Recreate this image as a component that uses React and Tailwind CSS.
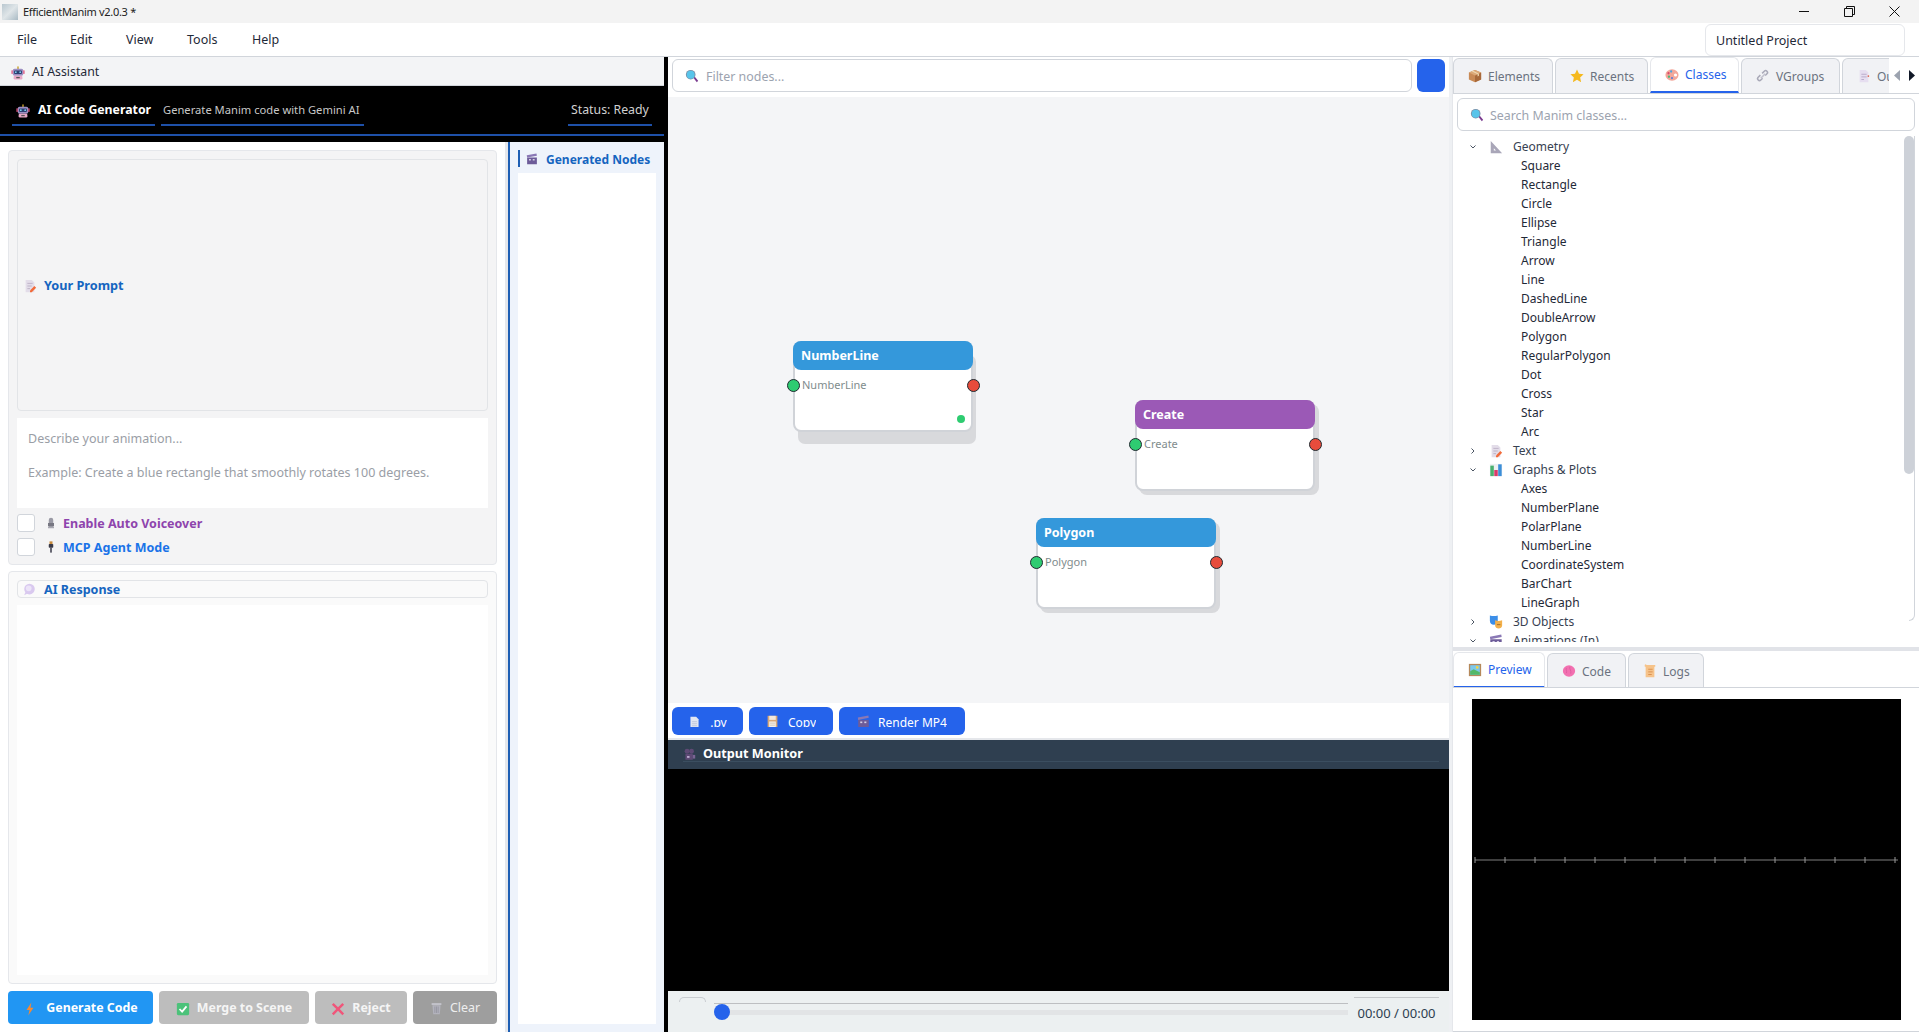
import React from "react";

const icons = {
    robot: <><rect x="7.2" y="0.5" width="1.6" height="3" fill="#c9a227"/><rect x="2" y="3" width="12" height="8" rx="2" fill="#9d8fc2"/><rect x="3.5" y="5" width="9" height="4" rx="1" fill="#2c3e70"/><circle cx="5.5" cy="7" r="1" fill="#7fd4f0"/><circle cx="10.5" cy="7" r="1" fill="#7fd4f0"/><rect x="3" y="11" width="10" height="4.5" rx="1.5" fill="#e9a8c6"/><rect x="6" y="12.5" width="4" height="1.5" fill="#555"/><rect x="0.5" y="5" width="1.5" height="4" fill="#e0557f"/><rect x="14" y="5" width="1.5" height="4" fill="#e0557f"/></>,
    memo: <><path d="M3 1h7l3 3v11H3z" fill="#e3dde9"/><path d="M5 5h6M5 8h5M5 11h3" stroke="#b9aec4" strokeWidth="1"/><path d="M8 13l5-5 2 2-5 5H8z" fill="#f26b3a"/></>,
    bubble: <><circle cx="8" cy="7.5" r="6.5" fill="#d9c9ef"/><circle cx="7" cy="6.5" r="3.5" fill="#ece4f8"/><path d="M3 11l-1.5 4 4-2z" fill="#d9c9ef"/></>,
    clapper: <><rect x="1.5" y="6" width="13" height="9" fill="#6d5c99"/><path d="M1 3l13-2.5.5 3L1.500 6z" fill="#8a78b5"/><rect x="4" y="8" width="2.500" height="2" fill="#d6cfe6"/><rect x="9" y="8" width="2.500" height="2" fill="#d6cfe6"/></>,
    mic: <><rect x="5" y="1" width="6" height="9" rx="3" fill="#9a9aa5"/><path d="M4 8h8v3a2 2 0 0 1-2 2H6a2 2 0 0 1-2-2z" fill="#777782"/><rect x="4" y="13" width="8" height="2" fill="#a8a8b2"/></>,
    plug: <><rect x="6" y="0.500" width="4" height="4" fill="#c98b3c"/><rect x="5" y="4" width="6" height="5" rx="1" fill="#3a3a48"/><rect x="7" y="9" width="2" height="6.500" fill="#3a3a48"/></>,
    bolt: <path d="M9.500 0.500L4 9h3.500L6 15.500 12 6.500H8.500z" fill="#f58a35"/>,
    check: <><rect x="1" y="1" width="14" height="14" rx="1.500" fill="#4cc27a"/><path d="M4 8l3 3 5-6" fill="none" stroke="#fff" strokeWidth="2"/></>,
    cross: <path d="M3 1l5 5 5-5 2 2-5 5 5 5-2 2-5-5-5 5-2-2 5-5-5-5z" fill="#f0567a"/>,
    trash: <><rect x="2" y="1.500" width="12" height="2" fill="#c9c9d2"/><path d="M3 4h10l-1 11H4z" fill="#b3b3bd"/><path d="M6 5.500v8M8 5.500v8M10 5.500v8" stroke="#8b8b96" strokeWidth="0.800"/></>,
    search: <><path d="M9.500 10l1.500-1.500 4 5-1.500 1.500z" fill="#7a3b8f"/><circle cx="6.500" cy="6.500" r="5.500" fill="#7a8fa6"/><circle cx="6.500" cy="6.500" r="4.500" fill="#58c4ea"/></>,
    box: <><path d="M8 1l7 3v8l-7 3-7-3V4z" fill="#c98a56"/><path d="M8 7.500v7.500l7-3V4z" fill="#a8693a"/><path d="M1 4l7 3.500L15 4 8 1z" fill="#dba877"/><path d="M4 2.500l7 3.500v2.500l1.500-.700V5.300L5.500 1.800z" fill="#f0d7b0"/></>,
    star: <path d="M8 0.500l2.300 5 5.200.600-3.900 3.600 1.100 5.300L8 12.300 3.300 15l1.100-5.300L.500 6.100l5.200-.600z" fill="#f5b91f"/>,
    palette: <><ellipse cx="8" cy="8" rx="7.500" ry="6.500" fill="#f3a79a"/><circle cx="4" cy="6" r="1.300" fill="#d84a6b"/><circle cx="7" cy="4" r="1.300" fill="#4aa5e0"/><circle cx="4.500" cy="10" r="1.300" fill="#48b878"/><circle cx="8" cy="11.500" r="1.300" fill="#5e7fd8"/><circle cx="12" cy="8" r="1.800" fill="#fff"/></>,
    link: <><path d="M6.500 9.500l-2 2a2 2 0 0 1-3-3l2.500-2.500" fill="none" stroke="#a9a9b8" strokeWidth="1.800" transform="translate(1 1)"/><path d="M9.500 6.500l2-2a2 2 0 0 0-3-3L6 4" fill="none" stroke="#a9a9b8" strokeWidth="1.800" transform="translate(1 1)"/><path d="M5.500 10.500l5-5" stroke="#c2c2ce" strokeWidth="1.800"/></>,
    page: <><path d="M3 1h7l3 3v11H3z" fill="#e6def0"/><path d="M5 6h6M5 9h6M5 12h3" stroke="#b5a6c6" strokeWidth="1"/><circle cx="13" cy="8" r="1" fill="#e0654f"/></>,
    ruler: <path d="M2 1l13 14H2zM5.500 9.500v2.500H8z" fill="#a9a6b8" fillRule="evenodd"/>,
    bars: <><rect x="1" y="1" width="14" height="14" fill="#eef0f2"/><rect x="1.500" y="3" width="4" height="12" fill="#49b06e"/><rect x="6" y="8" width="4" height="7" fill="#d83a6a"/><rect x="10.500" y="1.500" width="4" height="13.500" fill="#3c8ed8"/></>,
    masks: <><path d="M1 0.500c3 1 6 1 9 0v6c0 3-2 4.500-4.500 4.500S1 9.500 1 6.500z" fill="#3c8ee8"/><path d="M7 6c3 1 5 1 8 0v6c0 2-2 3.500-4 3.500S7 14 7 12z" fill="#f3b04a"/><path d="M9 11h4" stroke="#9a6a2a" strokeWidth="1"/></>,
    picture: <><rect x="1" y="1" width="14" height="14" fill="#b5885a"/><rect x="2.500" y="2.500" width="11" height="11" fill="#7cc8ec"/><path d="M2.500 13.500v-4l4-2.500 7 3.500v3z" fill="#53b868"/><circle cx="10.500" cy="5" r="1.500" fill="#f5d442"/></>,
    brain: <><ellipse cx="8" cy="8" rx="7" ry="6.500" fill="#f270b0"/><path d="M5 4.500c-1 2 1 3 0 6M9 3c-1 3 2 4 1 8" fill="none" stroke="#d9549a" strokeWidth="0.800"/></>,
    scroll: <><path d="M4 1h10v2h-1v12H3V3H2V2a1 1 0 0 1 2-1z" fill="#f6c38a"/><path d="M6 6h5M6 9h5M6 12h4" stroke="#d88c4a" strokeWidth="1"/></>,
    camera: <><circle cx="5" cy="4" r="3" fill="#5e4a75"/><circle cx="10.500" cy="4" r="3" fill="#5e4a75"/><rect x="3" y="7" width="9" height="7.500" fill="#5e4a75"/><rect x="12" y="8.500" width="3" height="4.500" fill="#7a6493"/><rect x="5" y="10" width="3" height="2" fill="#c9b8dc"/></>,
    file: <><path d="M3 1h7l3 3v11H3z" fill="#e2e6f2"/><path d="M5 7h6M5 9.500h6M5 12h6" stroke="#b9c0d6" strokeWidth="1"/></>,
    floppy: <><rect x="2" y="1" width="12" height="14" fill="#d8a878"/><rect x="4" y="1" width="8" height="5" fill="#f2e8dc"/><rect x="4" y="8" width="8" height="7" fill="#f7f1ea"/><path d="M5 10h6M5 12.500h6" stroke="#c4b5a4" strokeWidth="0.800"/></>,
};

const Icon = ({name, size = 14, className = ""}) => (
    <svg viewBox="0 0 16 16" width={size} height={size} className={`shrink-0 ${className}`}>{icons[name]}</svg>
);

const Chevron = ({open}) => (
    <svg viewBox="0 0 8 8" width="8" height="8" className="shrink-0">
        <path d={open ? "M1.500 2.500L4 5l2.500-2.500" : "M2.500 1.500L5 4 2.500 6.500"} fill="none" stroke="#4b5563" strokeWidth="1"/>
    </svg>
);

const Tab = ({icon, label, width, active}) => (
    <div className={`flex items-center shrink-0 overflow-hidden rounded-t-md border border-b-0 pl-[14px] gap-[6px] text-[12px] ${width} ${active ? "h-[36px] bg-white border-[#e5e7eb] border-b-2 border-b-[#2563eb] text-[#2563eb]" : "h-[35px] mt-[1px] bg-[#f1f2f5] border-[#d1d5db] text-[#6b7280]"}`}>
        <Icon name={icon} size={14}/>
        <span className={active ? "" : "pt-[1px]"}>{label}</span>
    </div>
);

const Node = ({title, color, left, top, big}) => (
    <div className={`absolute w-[180px] h-[91px] rounded-lg bg-white border-2 border-[#d0d3d8] ${left} ${top} ${big ? "shadow-[4px_13px_0_-1px_#d8d9dc]" : "shadow-[4px_4px_0_0_#d8d9dc]"}`}>
        <div className="-mx-[2px] -mt-[2px] h-[29px] rounded-lg flex items-center pl-[8px] pt-[2px] text-[12.500px] font-bold text-white" style={{background: color}}>{title}</div>
        <div className="pl-[7px] pt-[7px] text-[11px] leading-[16px] text-[#7f8c8d]">{title}</div>
        <div className="absolute -left-[8px] top-[36px] w-[13px] h-[13px] rounded-full bg-[#2ecc71] border border-[#1f2a30]"/>
        <div className="absolute -right-[9px] top-[36px] w-[13px] h-[13px] rounded-full bg-[#e74c3c] border border-[#1f2a30]"/>
        {big && <div className="absolute right-[6px] bottom-[7px] w-[8px] h-[8px] rounded-full bg-[#2ecc71]"/>}
    </div>
);

const tree = [
    {label: "Geometry", icon: "ruler", open: true},
    {label: "Square"}, {label: "Rectangle"}, {label: "Circle"}, {label: "Ellipse"}, {label: "Triangle"},
    {label: "Arrow"}, {label: "Line"}, {label: "DashedLine"}, {label: "DoubleArrow"}, {label: "Polygon"},
    {label: "RegularPolygon"}, {label: "Dot"}, {label: "Cross"}, {label: "Star"}, {label: "Arc"},
    {label: "Text", icon: "memo"},
    {label: "Graphs & Plots", icon: "bars", open: true},
    {label: "Axes"}, {label: "NumberPlane"}, {label: "PolarPlane"}, {label: "NumberLine"},
    {label: "CoordinateSystem"}, {label: "BarChart"}, {label: "LineGraph"},
    {label: "3D Objects", icon: "masks"},
    {label: "Animations (In)", icon: "clapper", open: true},
];

const ticks = Array.from({length: 15}, (_, i) => i * 30 + 3);

export default () => {
    return (
        <div className="w-[1919px] h-[1032px] flex flex-col overflow-hidden bg-white font-['Noto_Sans',sans-serif] text-[12px] text-[#1f2937]">
            {/* title bar */}
            <div className="h-[23px] shrink-0 flex items-center bg-[#f3f3f3] pl-[2px]">
                <div className="w-[16px] h-[16px] bg-[linear-gradient(135deg,#b9c7cf,#dfe5e8_50%,#a9bac4)] mr-[5px]"/>
                <span className="pt-[2px] text-[11px] tracking-[-0.3px] text-[#222]">EfficientManim v2.0.3 *</span>
                <div className="ml-auto flex items-center gap-[34px] pr-[19px] text-[#111]">
                    <svg width="11" height="11" viewBox="0 0 11 11"><path d="M0 5.500h10" stroke="#111" strokeWidth="1"/></svg>
                    <svg width="11" height="11" viewBox="0 0 11 11"><path d="M.500 2.500h8v8h-8zM2.500 2.500v-2h8v8h-2" fill="none" stroke="#111" strokeWidth="1"/></svg>
                    <svg width="11" height="11" viewBox="0 0 11 11"><path d="M.500.500l10 10M10.500.500l-10 10" stroke="#111" strokeWidth="1"/></svg>
                </div>
            </div>

            {/* menu bar */}
            <div className="h-[34px] shrink-0 flex items-center bg-white border-b border-[#d1d5db] pl-[17px] text-[12.500px]">
                <span className="w-[53px] pt-[2px]">File</span>
                <span className="w-[56px] pt-[2px]">Edit</span>
                <span className="w-[61px] pt-[2px]">View</span>
                <span className="w-[65px] pt-[2px]">Tools</span>
                <span className="pt-[2px]">Help</span>
                <div className="ml-auto mr-[14px] w-[200px] h-[32px] rounded-md border border-[#e5e7eb] flex items-center pl-[10px] pt-[3px]">Untitled Project</div>
            </div>

            <div className="flex flex-1 min-h-0">
                {/* ai assistant dock */}
                <div className="w-[664px] shrink-0 flex flex-col">
                    <div className="h-[29px] shrink-0 flex items-center gap-[7px] pl-[11px] pt-[3px] bg-[#f3f4f6] border-b border-[#d1d5db] text-[12.300px]">
                        <Icon name="robot" size={14}/>
                        <span>AI Assistant</span>
                    </div>
                    <div className="shrink-0 bg-black">
                        <div className="h-[48px] flex px-[12px] pt-[8px] gap-[6px]">
                            <div className="h-[32px] w-[143px] border-b-2 border-[#1e50a8] flex items-center gap-[8px] pl-[4px] pt-[3px] text-[12.300px] font-bold text-white whitespace-nowrap">
                                <Icon name="robot" size={14}/>
                                <span>AI Code Generator</span>
                            </div>
                            <div className="h-[32px] w-[203px] border-b-2 border-[#1e50a8] flex items-center pl-[2px] pt-[3px] text-[11.200px] text-[#c8c8c8] whitespace-nowrap">Generate Manim code with Gemini AI</div>
                            <div className="ml-auto h-[32px] w-[84px] border-b-2 border-[#1e50a8] flex items-center pl-[3px] pt-[3px] text-[12.300px] text-[#d0d0d0] whitespace-nowrap">Status: Ready</div>
                        </div>
                        <div className="h-[2px] bg-[#1e50a8]"/>
                        <div className="h-[6px]"/>
                    </div>
                    <div className="flex flex-1 min-h-0">
                        <div className="w-[505px] shrink-0 flex flex-col p-[8px] bg-white">
                            <div className="shrink-0 rounded border border-[#e5e7eb] bg-[#f4f4f5] p-[8px] flex flex-col">
                                <div className="h-[252px] rounded border border-[#e2e4e7] flex items-center pl-[5px] pt-[2px] gap-[7px] text-[12.700px] font-bold text-[#1565c0]">
                                    <Icon name="memo" size={14}/>
                                    <span>Your Prompt</span>
                                </div>
                                <div className="mt-[7px] h-[90px] bg-white pl-[11px] pt-[11px] text-[12.500px] leading-[20px] text-[#9a9ea6]">
                                    <div>Describe your animation...</div>
                                    <div className="mt-[14px]">Example: Create a blue rectangle that smoothly rotates 100 degrees.</div>
                                </div>
                                <div className="mt-[6px] h-[18px] flex items-center">
                                    <div className="w-[18px] h-[18px] rounded-[3px] border border-[#d1d5db] bg-white mr-[10px]"/>
                                    <Icon name="mic" size={12} className="mr-[6px]"/>
                                    <span className="pt-[3px] text-[12.500px] font-bold text-[#8e44ad]">Enable Auto Voiceover</span>
                                </div>
                                <div className="mt-[6px] h-[18px] flex items-center">
                                    <div className="w-[18px] h-[18px] rounded-[3px] border border-[#d1d5db] bg-white mr-[10px]"/>
                                    <Icon name="plug" size={12} className="mr-[6px]"/>
                                    <span className="pt-[3px] text-[12.500px] font-bold text-[#1a73e8]">MCP Agent Mode</span>
                                </div>
                            </div>
                            <div className="mt-[6px] flex-1 min-h-0 rounded border border-[#e5e7eb] bg-[#fafafa] p-[8px] flex flex-col">
                                <div className="h-[18px] shrink-0 rounded border border-[#e2e4e7] flex items-center pl-[5px] gap-[8px] text-[12.500px] font-bold text-[#1565c0]">
                                    <Icon name="bubble" size={13}/>
                                    <span className="pt-[2px]">AI Response</span>
                                </div>
                                <div className="mt-[7px] flex-1 bg-white"/>
                            </div>
                            <div className="mt-[7px] h-[33px] shrink-0 flex gap-[6px] text-[12.400px] font-bold text-white">
                                <div className="w-[145px] rounded bg-[#2196f3] flex items-center justify-center gap-[9px] pt-[2px]"><Icon name="bolt" size={14}/>Generate Code</div>
                                <div className="w-[150px] rounded bg-[#bdbdbd] flex items-center justify-center gap-[7px] pt-[2px] text-[#f5f5f5]"><Icon name="check" size={14}/>Merge to Scene</div>
                                <div className="w-[92px] rounded bg-[#bdbdbd] flex items-center justify-center gap-[7px] pt-[2px] text-[#f5f5f5]"><Icon name="cross" size={14}/>Reject</div>
                                <div className="w-[84px] rounded bg-[#9e9e9e] flex items-center justify-center gap-[7px] pt-[2px] font-normal text-[#eeeeee]"><Icon name="trash" size={13}/>Clear</div>
                            </div>
                        </div>
                        <div className="w-[3px] shrink-0 bg-[#e5e7eb]"/>
                        <div className="w-[2px] shrink-0 bg-[#1e5fb4]"/>
                        <div className="flex-1 flex flex-col bg-[#eef3fb] p-[8px]">
                            <div className="h-[17px] shrink-0 border-l-2 border-[#1e5fb4] flex items-center pl-[6px] gap-[8px] font-bold text-[#1565c0] whitespace-nowrap">
                                <Icon name="clapper" size={12}/>
                                <span className="pt-[2px]">Generated Nodes</span>
                            </div>
                            <div className="mt-[6px] flex-1 bg-white"/>
                        </div>
                    </div>
                </div>

                <div className="w-[4px] shrink-0 bg-black"/>

                {/* canvas + output */}
                <div className="w-[781px] shrink-0 flex flex-col">
                    <div className="h-[40px] shrink-0 bg-white flex gap-[5px] pl-[4px] pt-[2px]">
                        <div className="w-[740px] h-[33px] rounded-md border border-[#d1d5db] flex items-center pl-[12px] gap-[7px] text-[12.400px] text-[#9ca3af]">
                            <Icon name="search" size={14}/>
                            <span className="pt-[3px]">Filter nodes...</span>
                        </div>
                        <div className="w-[28px] h-[33px] rounded-md bg-[#2563eb]"/>
                    </div>
                    <div className="relative flex-1 min-h-0 bg-[#f4f5f7]">
                        <Node title="NumberLine" color="#3498db" left="left-[125px]" top="top-[244px]" big/>
                        <Node title="Create" color="#9b59b6" left="left-[467px]" top="top-[303px]"/>
                        <Node title="Polygon" color="#3498db" left="left-[368px]" top="top-[421px]"/>
                    </div>
                    <div className="h-[35px] shrink-0 bg-white flex gap-[6px] pl-[4px] pt-[4px] text-[12px] text-white">
                        <div className="w-[71px] h-[28px] rounded-md bg-[#2563eb] flex justify-center">
                            <div className="h-[20px] overflow-hidden flex gap-[9px] pt-[8px] leading-[16px]"><Icon name="file" size={13} className="mt-[1px]"/>.py</div>
                        </div>
                        <div className="w-[84px] h-[28px] rounded-md bg-[#2563eb] flex justify-center">
                            <div className="h-[20px] overflow-hidden flex gap-[9px] pt-[8px] leading-[16px]"><Icon name="floppy" size={13}/>Copy</div>
                        </div>
                        <div className="w-[126px] h-[28px] rounded-md bg-[#2563eb] flex justify-center">
                            <div className="h-[20px] overflow-hidden flex gap-[8px] pt-[8px] leading-[16px]"><Icon name="clapper" size={13}/>Render MP4</div>
                        </div>
                    </div>
                    <div className="h-[2px] shrink-0 bg-[#e5e7eb]"/>
                    <div className="h-[29px] shrink-0 bg-[#2f3f50] pl-[15px]">
                        <div className="h-[22px] mr-[10px] border-b border-[#3b4e60] flex items-center gap-[7px] pt-[7px] font-bold text-white text-[12.700px]">
                            <Icon name="camera" size={13}/>
                            <span>Output Monitor</span>
                        </div>
                    </div>
                    <div className="h-[222px] shrink-0 bg-black"/>
                    <div className="h-[41px] shrink-0 bg-[#ecf0f1] flex pl-[11px]">
                        <div className="w-[27px] h-[5px] mt-[6px] rounded-t-md border-t border-x border-[#c8ccd0]"/>
                        <div className="relative w-[634px] ml-[8px] mt-[12px]">
                            <div className="h-[1px] bg-[#bdbfc2]"/>
                            <div className="h-[5px] mt-[6px] bg-[#e2e4e6]"/>
                            <div className="absolute left-0 top-[1px] w-[16px] h-[16px] rounded-full bg-[#2563eb]"/>
                        </div>
                        <div className="w-[85px] ml-[6px] mt-[6px]">
                            <div className="h-[1px] bg-[#c4c7ca]"/>
                            <div className="mt-[7px] text-[13px] leading-[16px] text-center text-[#2c3e50] whitespace-nowrap">00:00 / 00:00</div>
                        </div>
                    </div>
                </div>

                <div className="w-[3px] shrink-0 bg-[#eef0f3]"/>

                {/* classes + preview */}
                <div className="flex-1 min-w-0 flex flex-col border-l border-[#e5e7eb]">
                    <div className="h-[37px] shrink-0 flex gap-[2px] border-b border-[#d1d5db] relative overflow-hidden">
                        <Tab icon="box" label="Elements" width="w-[100px]"/>
                        <Tab icon="star" label="Recents" width="w-[93px]"/>
                        <Tab icon="palette" label="Classes" width="w-[89px]" active/>
                        <Tab icon="link" label="VGroups" width="w-[99px]"/>
                        <Tab icon="page" label="Outliner" width="w-[60px]"/>
                        <div className="absolute right-0 top-0 bottom-0 w-[30px] bg-white flex items-center justify-center gap-[9px]">
                            <svg width="6" height="11" viewBox="0 0 6 11"><path d="M6 0L0 5.500 6 11z" fill="#9ca3af"/></svg>
                            <svg width="6" height="11" viewBox="0 0 6 11"><path d="M0 0l6 5.500L0 11z" fill="#111827"/></svg>
                        </div>
                    </div>
                    <div className="h-[40px] shrink-0 pl-[4px] pr-[4px] pt-[4px]">
                        <div className="h-[33px] rounded-md border border-[#d1d5db] flex items-center pl-[12px] gap-[6px] text-[12.400px] text-[#9ca3af]">
                            <Icon name="search" size={14}/>
                            <span className="pt-[3px]">Search Manim classes...</span>
                        </div>
                    </div>
                    <div className="relative flex-1 min-h-0 overflow-hidden pt-[3px] mb-[5px]">
                        {tree.map((row) => (
                            <div key={row.label} className="h-[19px] flex items-center whitespace-nowrap text-[12px]">
                                {row.icon ? (
                                    <>
                                        <span className="w-[20px] ml-[16px] flex"><Chevron open={row.open}/></span>
                                        <span className="w-[24px] flex"><Icon name={row.icon} size={14}/></span>
                                        <span className="text-[#374151]">{row.label}</span>
                                    </>
                                ) : (
                                    <span className="ml-[68px]">{row.label}</span>
                                )}
                            </div>
                        ))}
                        <div className="absolute right-[5px] top-[2px] w-[10px] h-[338px] rounded-full bg-[#cdd1d8]"/>
                        <div className="absolute right-[4px] top-[2px] w-[6px] h-[485px] rounded-br-md border-r border-b border-[#d1d5db]"/>
                    </div>
                    <div className="h-[4px] shrink-0 bg-[#e1e3e8]"/>
                    <div className="h-[37px] shrink-0 flex gap-[2px] pt-[1px] border-b border-[#d1d5db] overflow-hidden">
                        <Tab icon="picture" label="Preview" width="w-[92px]" active/>
                        <Tab icon="brain" label="Code" width="w-[79px]"/>
                        <Tab icon="scroll" label="Logs" width="w-[76px]"/>
                    </div>
                    <div className="h-[344px] shrink-0 pl-[19px] pr-[18px] pt-[11px] pb-[11px] border-b border-[#d1d5db] bg-white">
                        <div className="h-full bg-black flex items-center">
                            <svg width="428" height="8" viewBox="0 0 428 8" className="block">
                                <path d="M3 4h423" stroke="#555" strokeWidth="1.500"/>
                                {ticks.map((x) => <path key={x} d={`M${x} 1v6`} stroke="#999" strokeWidth="1"/>)}
                            </svg>
                        </div>
                    </div>
                </div>
            </div>
        </div>
    );
};
